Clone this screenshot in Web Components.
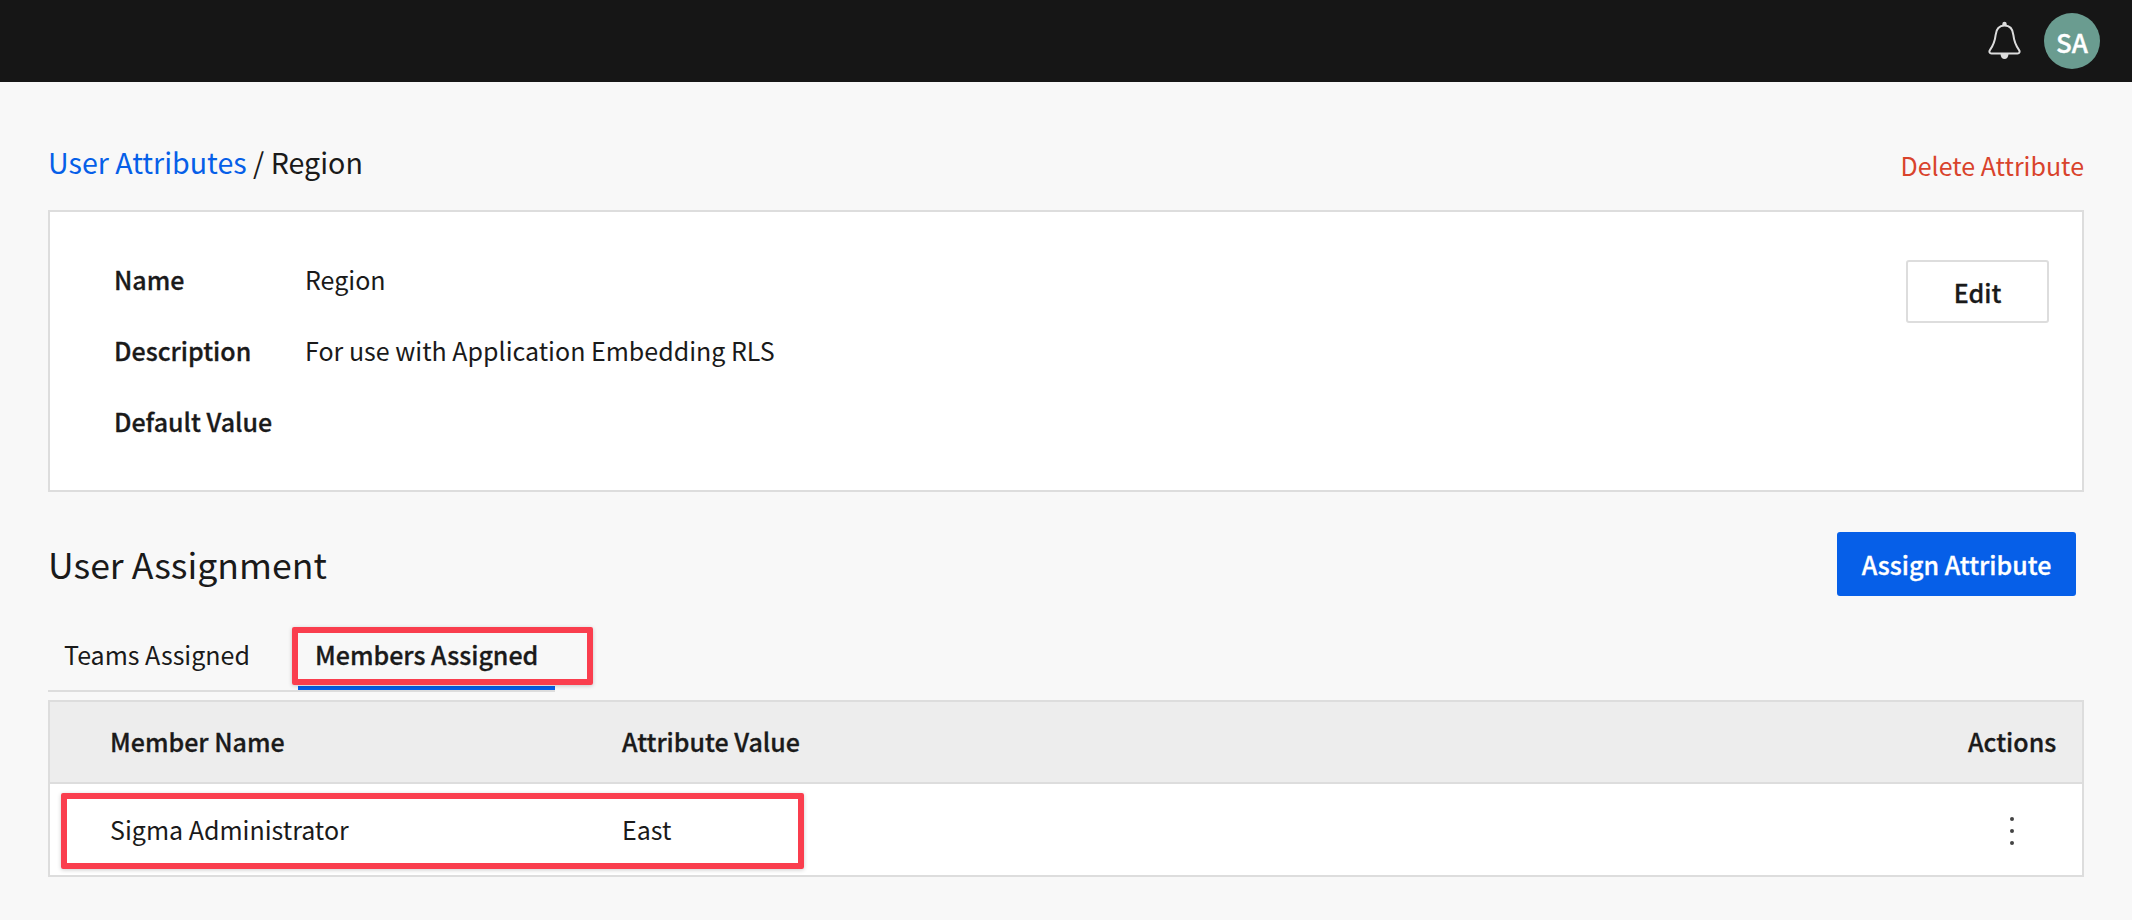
<!DOCTYPE html>
<html>
<head>
<meta charset="utf-8">
<title>Region</title>
<style>
    html, body { margin: 0; padding: 0; }
    body {
        background: #f8f8f8;
        color: #1a1a1a;
        font-family: "Noto Sans CJK SC", "Noto Sans", sans-serif;
        font-size: 25px;
        width: 2132px;
        height: 920px;
        overflow: hidden;
    }
</style>
</head>
<body>
<app-shell>
    <app-topbar slot="top" initials="SA"></app-topbar>
    <page-header current="Region" parent="User Attributes" action="Delete Attribute"></page-header>
    <info-card>
        <info-row label="Name">Region</info-row>
        <info-row label="Description">For use with Application Embedding RLS</info-row>
        <info-row label="Default Value"></info-row>
        <app-button slot="action">Edit</app-button>
    </info-card>
    <section-header title="User Assignment">
        <app-button primary>Assign Attribute</app-button>
    </section-header>
    <tab-bar>
        <tab-item>Teams Assigned</tab-item>
        <tab-item active>Members Assigned</tab-item>
    </tab-bar>
    <data-table></data-table>
    <note-box style="left:292px;top:545px;width:301px;height:58px"></note-box>
    <note-box style="left:61px;top:711px;width:743px;height:76px"></note-box>
</app-shell>

<script>
class AppShell extends HTMLElement {
    constructor() {
        super();
        this.attachShadow({ mode: 'open' });
        this.shadowRoot.innerHTML = `
            <style>
                :host { display: block; }
                main { position: relative; padding: 0 48px; }
            </style>
            <slot name="top"></slot>
            <main><slot></slot></main>
        `;
    }
}

class AppTopbar extends HTMLElement {
    constructor() {
        super();
        this.attachShadow({ mode: 'open' });
    }

    connectedCallback() {
        this.shadowRoot.innerHTML = `
            <style>
                :host {
                    display: flex;
                    align-items: center;
                    justify-content: flex-end;
                    gap: 23px;
                    height: 82px;
                    padding-right: 32px;
                    background: #161616;
                }
                svg { display: block; }
                .avatar {
                    width: 56px;
                    height: 56px;
                    border-radius: 50%;
                    background: #6a9c90;
                    color: #fff;
                    font-size: 26px;
                    font-weight: 500;
                    -webkit-text-stroke: 0.3px #fff;
                    display: flex;
                    align-items: center;
                    justify-content: center;
                }
            </style>
            <svg width="33" height="40" viewBox="0 0 33 40" fill="none">
                <path d="M16.5 4.5c-5.6 0-8.4 4.4-8.9 9.6-.6 5.900-2.300 10.200-5.700 15-1 1.400-.4 3.400 1.600 3.400h26c2 0 2.600-2 1.600-3.400-3.400-4.800-5.100-9.100-5.700-15-.5-5.200-3.300-9.600-8.900-9.600z" stroke="#dcdcdc" stroke-width="2"/>
                <path d="M14.300 5V3a2.200 2.200 0 0 1 4.400 0v2z" fill="#dcdcdc"/>
                <path d="M12.500 33h8c0 3-1.800 5-4 5s-4-2-4-5z" fill="#dcdcdc"/>
            </svg>
            <div class="avatar">${this.getAttribute('initials')}</div>
        `;
    }
}

class PageHeader extends HTMLElement {
    constructor() {
        super();
        this.attachShadow({ mode: 'open' });
    }

    connectedCallback() {
        this.shadowRoot.innerHTML = `
            <style>
                :host {
                    display: flex;
                    align-items: center;
                    justify-content: space-between;
                    height: 40px;
                    padding: 60px 0 28px;
                }
                .crumbs { font-size: 28.6px; margin-bottom: 2px; }
                a { color: #065fe8; text-decoration: none; }
                .action { color: #d9432c; font-size: 25px; margin-top: 6px; }
            </style>
            <div class="crumbs"><a href="#">${this.getAttribute('parent')}</a> / ${this.getAttribute('current')}</div>
            <div class="action">${this.getAttribute('action')}</div>
        `;
    }
}

class InfoCard extends HTMLElement {
    constructor() {
        super();
        this.attachShadow({ mode: 'open' });
        this.shadowRoot.innerHTML = `
            <style>
                :host {
                    display: flex;
                    justify-content: space-between;
                    align-items: flex-start;
                    box-sizing: border-box;
                    height: 282px;
                    padding: 31px 33px 0 64px;
                    background: #fff;
                    border: 2px solid #dddddd;
                }
                .rows { display: flex; flex-direction: column; }
                .act { margin-top: 17px; }
            </style>
            <div class="rows"><slot></slot></div>
            <div class="act"><slot name="action"></slot></div>
        `;
    }
}

class InfoRow extends HTMLElement {
    constructor() {
        super();
        this.attachShadow({ mode: 'open' });
    }

    connectedCallback() {
        this.shadowRoot.innerHTML = `
            <style>
                :host {
                    display: flex;
                    align-items: center;
                    height: 71px;
                }
                b { width: 191px; font-weight: 500; -webkit-text-stroke: 0.3px #1a1a1a; }
            </style>
            <b>${this.getAttribute('label')}</b>
            <span><slot></slot></span>
        `;
    }
}

class AppButton extends HTMLElement {
    constructor() {
        super();
        this.attachShadow({ mode: 'open' });
        this.shadowRoot.innerHTML = `
            <style>
                :host {
                    display: flex;
                    align-items: center;
                    justify-content: center;
                    box-sizing: border-box;
                    width: 143px;
                    height: 63px;
                    background: #fff;
                    border: 2px solid #dddddd;
                    border-radius: 3px;
                    color: #1a1a1a;
                    font-weight: 500;
                    -webkit-text-stroke: 0.3px #1a1a1a;
                }
                :host([primary]) {
                    width: 239px;
                    height: 64px;
                    background: #065fe8;
                    border-color: #065fe8;
                    color: #fff;
                    -webkit-text-stroke: 0.3px #fff;
                }
            </style>
            <slot></slot>
        `;
    }
}

class SectionHeader extends HTMLElement {
    constructor() {
        super();
        this.attachShadow({ mode: 'open' });
    }

    connectedCallback() {
        this.shadowRoot.innerHTML = `
            <style>
                :host {
                    display: flex;
                    align-items: center;
                    justify-content: space-between;
                    height: 64px;
                    padding: 40px 8px 0 0;
                }
                h2 { margin: 0 0 2px; font-size: 35.6px; font-weight: 400; }
            </style>
            <h2>${this.getAttribute('title')}</h2>
            <slot></slot>
        `;
    }
}

class TabBar extends HTMLElement {
    constructor() {
        super();
        this.attachShadow({ mode: 'open' });
        this.shadowRoot.innerHTML = `
            <style>
                :host {
                    display: flex;
                    align-items: flex-end;
                    gap: 16px;
                    box-sizing: border-box;
                    width: 507px;
                    height: 96px;
                    border-bottom: 2px solid #dddddd;
                }
            </style>
            <slot></slot>
        `;
    }
}

class TabItem extends HTMLElement {
    constructor() {
        super();
        this.attachShadow({ mode: 'open' });
        this.shadowRoot.innerHTML = `
            <style>
                :host {
                    display: flex;
                    align-items: center;
                    box-sizing: border-box;
                    width: 234px;
                    height: 68px;
                    padding: 0 16px;
                    border-bottom: 4px solid transparent;
                    white-space: nowrap;
                }
                :host([active]) {
                    width: 257px;
                    padding-left: 17px;
                    font-weight: 500;
                    -webkit-text-stroke: 0.3px #1a1a1a;
                    border-bottom-color: #065fe8;
                }
            </style>
            <slot></slot>
        `;
    }
}

class DataTable extends HTMLElement {
    constructor() {
        super();
        this.attachShadow({ mode: 'open' });
        this.shadowRoot.innerHTML = `
            <style>
                :host {
                    display: block;
                    margin: 8px 0 0;
                    background: #fff;
                    border: 2px solid #dddddd;
                }
                table { width: 100%; border-collapse: collapse; table-layout: fixed; }
                th, td { padding: 0 0 2px; text-align: left; box-sizing: border-box; }
                th {
                    height: 81px;
                    background: #ededed;
                    border-bottom: 2px solid #dddddd;
                    font-weight: 500;
                    -webkit-text-stroke: 0.3px #1a1a1a;
                }
                td { height: 92px; }
                .name { width: 572px; padding-left: 60px; }
                .act { width: 114px; padding-right: 26px; text-align: center; }
                td.act { padding-top: 2px; padding-bottom: 0; }
                svg { display: block; margin: 0 auto; }
            </style>
            <table>
                <tr>
                    <th class="name">Member Name</th>
                    <th>Attribute Value</th>
                    <th class="act">Actions</th>
                </tr>
                <tr>
                    <td class="name">Sigma Administrator</td>
                    <td>East</td>
                    <td class="act">
                        <svg width="6" height="30" viewBox="0 0 6 30" fill="#444">
                            <circle cx="3" cy="3" r="2"/>
                            <circle cx="3" cy="15" r="2"/>
                            <circle cx="3" cy="27" r="2"/>
                        </svg>
                    </td>
                </tr>
            </table>
        `;
    }
}

// red markup drawn on top of the screenshot
class NoteBox extends HTMLElement {
    constructor() {
        super();
        this.attachShadow({ mode: 'open' });
        this.shadowRoot.innerHTML = `
            <style>
                :host {
                    display: block;
                    position: absolute;
                    box-sizing: border-box;
                    border: 6px solid #fa3e4e;
                    border-radius: 2px;
                    box-shadow: 0 1px 4px rgba(0, 0, 0, 0.2);
                }
            </style>
        `;
    }
}

customElements.define('app-shell', AppShell);
customElements.define('app-topbar', AppTopbar);
customElements.define('page-header', PageHeader);
customElements.define('info-card', InfoCard);
customElements.define('info-row', InfoRow);
customElements.define('app-button', AppButton);
customElements.define('section-header', SectionHeader);
customElements.define('tab-bar', TabBar);
customElements.define('tab-item', TabItem);
customElements.define('data-table', DataTable);
customElements.define('note-box', NoteBox);
</script>
</body>
</html>
